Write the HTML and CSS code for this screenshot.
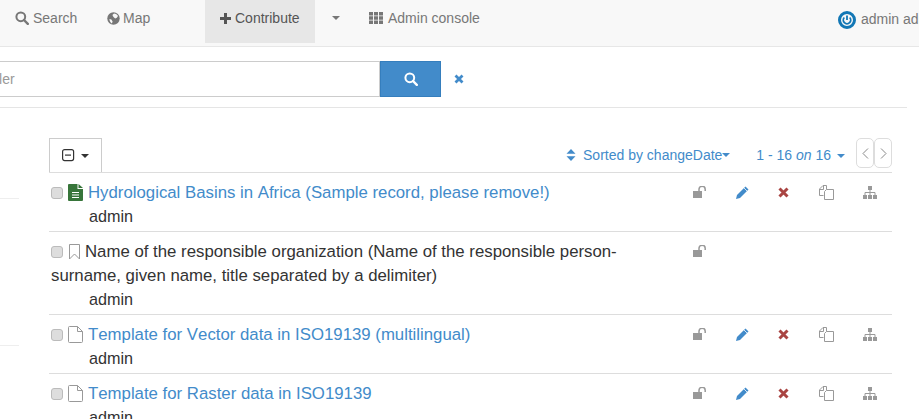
FILE: index.html
```html
<!doctype html>
<html>
  <head>
    <meta charset="utf-8">
    <title>Search and edit</title>
    <link rel="stylesheet" href="styles.css">
  </head>
  <body>
    <nav class="topbar">
      <a class="nav-item nav-search"><svg class="ico" width="14" height="14" viewBox="0 0 14 14"><circle cx="5.800" cy="5.800" r="4.400" fill="none" stroke="currentColor" stroke-width="2"/><path d="M9 9l3.800 3.800" stroke="currentColor" stroke-width="2.400" stroke-linecap="round"/></svg>Search</a>
      <a class="nav-item nav-map"><svg class="ico" width="13" height="13" viewBox="0 0 13 13"><circle cx="6.500" cy="6.500" r="6.200" fill="currentColor"/><path d="M7 1.500c1.800.2 3.200 1.100 4 2.400L9.800 5.800 8.200 6.400 6.500 5 5.400 3zM2.400 7l2 .6 1.200 2-.7 1.800C3.500 11 2.600 9 2.400 7z" fill="#f8f8f8"/></svg>Map</a>
      <a class="nav-item nav-active"><svg class="ico" width="11" height="11" viewBox="0 0 11 11"><path d="M4 0h3v4h4v3H7v4H4V7H0V4h4z" fill="currentColor"/></svg>Contribute</a>
      <a class="nav-caret"><span class="caret"></span></a>
      <a class="nav-item nav-admin"><svg class="ico ico-wide" width="14" height="12" viewBox="0 0 14 12"><path d="M0 0h4v3.400H0zM5 0h4v3.400H5zM10 0h4v3.400h-4zM0 4.300h4v3.400H0zM5 4.300h4v3.400H5zM10 4.300h4v3.400h-4zM0 8.600h4V12H0zM5 8.600h4V12H5zM10 8.600h4V12h-4z" fill="currentColor"/></svg>Admin console</a>
      <a class="nav-user"><svg class="ico ico-wide" width="18" height="18" viewBox="0 0 18 18"><circle cx="9" cy="9" r="7.500" fill="none" stroke="#1277b5" stroke-width="3"/><path d="M6.300 6.500a3.700 3.700 0 1 0 5.400 0" fill="none" stroke="#1277b5" stroke-width="1.800"/><path d="M9 4.500V9" stroke="#1277b5" stroke-width="1.800"/></svg>admin admin</a>
    </nav>

    <div class="search-row">
      <div class="search-field">filler</div>
      <button class="search-btn"><svg width="14" height="14" viewBox="0 0 14 14"><circle cx="5.800" cy="5.800" r="4.400" fill="none" stroke="#fff" stroke-width="2"/><path d="M9 9l3.800 3.800" stroke="#fff" stroke-width="2.400" stroke-linecap="round"/></svg></button>
      <svg class="search-clear" width="10" height="10" viewBox="0 0 10 10"><path d="M1.500 1.500l7 7M8.500 1.500l-7 7" stroke="#428bca" stroke-width="2.800"/></svg>
    </div>

    <div class="content">
      <aside class="facets">
        <div class="facet facet-one"></div>
        <div class="facet facet-two"></div>
      </aside>

      <section class="results">
        <div class="toolbar">
          <button class="select-btn"><svg width="13" height="13" viewBox="0 0 13 13"><rect x=".6" y=".6" width="11" height="11" rx="2" fill="none" stroke="#333" stroke-width="1.200"/><path d="M3 6.100h6" stroke="#333" stroke-width="1.200"/></svg><span class="caret dark"></span></button>
          <div class="tools">
            <a class="sort"><svg width="10" height="12" viewBox="0 0 10 12"><path d="M5 0l4.500 4.700H.5zM5 12L.5 7.300h9z" fill="#428bca"/></svg>Sorted by changeDate<span class="caret blue tight"></span></a>
            <a class="range">1 - 16 <i>on</i> 16 <span class="caret blue"></span></a>
            <div class="pager">
              <button class="page-btn"><svg width="7" height="11" viewBox="0 0 7 11"><path d="M6 .5L1 5.500l5 5" fill="none" stroke="#888" stroke-width="1"/></svg></button>
              <button class="page-btn"><svg width="7" height="11" viewBox="0 0 7 11"><path d="M1 .5l5 5-5 5" fill="none" stroke="#888" stroke-width="1"/></svg></button>
            </div>
          </div>
        </div>

        <div id="rows"></div>
      </section>
    </div>

    <script>
      // records shown in the list
      const records = [
        { title: "Hydrological Basins in Africa (Sample record, please remove!)", icon: "dataset", link: true, full: true },
        { title: "Name of the responsible organization (Name of the responsible person-surname, given name, title separated by a delimiter)", icon: "bookmark", link: false, full: false },
        { title: "Template for Vector data in ISO19139 (multilingual)", icon: "file", link: true, full: true },
        { title: "Template for Raster data in ISO19139", icon: "file", link: true, full: true }
      ];

      const icons = {
        dataset: '<svg class="type" width="15" height="17" viewBox="0 0 15 17"><path d="M1 0H9.500v5h5.500v11a1 1 0 0 1-1 1H1a1 1 0 0 1-1-1V1a1 1 0 0 1 1-1zM10.500 0L15 4h-4.500z" fill="#37753a"/><path d="M4 8.500h7M4 11h7M4 13.500h7" stroke="#fff" stroke-width="1.200"/></svg>',
        bookmark: '<svg class="type type-mark" width="13" height="16" viewBox="0 0 13 16"><path d="M1.500.5h10v14.500l-5-5-5 5z" fill="none" stroke="#999" stroke-width="1"/></svg>',
        file: '<svg class="type" width="15" height="17" viewBox="0 0 15 17"><path d="M1.500.5h8l5 5v10a1 1 0 0 1-1 1h-12a1 1 0 0 1-1-1v-14a1 1 0 0 1 1-1zM9.500.5v5h5" fill="none" stroke="#999" stroke-width="1"/></svg>'
      };

      const lock = '<svg width="13" height="12" viewBox="0 0 13 12"><path d="M0 5h9v7H0z" fill="#999"/><path d="M6 5V3.300a3 3 0 0 1 6.200 0V5" fill="none" stroke="#999" stroke-width="1.500"/></svg>';
      const pencil = '<svg width="13" height="13" viewBox="0 0 13 13"><path d="M9.500.5l3 3-8.500 8.500L0 13l1-4z" fill="#428bca"/><path d="M8 2l3 3" stroke="#fff" stroke-width=".8"/></svg>';
      const cross = '<svg width="11" height="11" viewBox="0 0 11 11"><path d="M1.500 1.500l8 8M9.500 1.500l-8 8" stroke="#a94442" stroke-width="3"/></svg>';
      const copy = '<svg width="15" height="15" viewBox="0 0 15 15"><path d="M4.500 10.500H.5V4l3.500-3.500h3.500v4" fill="none" stroke="#999"/><path d="M.5 4.500H4.500v-4" fill="none" stroke="#999"/><path d="M7.500 4.500h7v10h-9V6.500z" fill="#fff" stroke="#999"/></svg>';
      const tree = '<svg width="14" height="13" viewBox="0 0 14 13"><path d="M5 0h4v4H5zM0 9h4v4H0zM5 9h4v4H5zM10 9h4v4h-4z" fill="#999"/><path d="M7 4v5M2 9V6.500h10V9" fill="none" stroke="#999"/></svg>';

      const rows = document.getElementById('rows');

      for (let i = 0; i < records.length; i++) {
        const r = records[i];
        const row = document.createElement('div');
        row.classList.add('row');

        const titleHtml = r.link ? `<a class="title-link">${r.title}</a>` : r.title;
        let actions = `<span class="act">${lock}</span>`;
        if (r.full) {
          actions += `<span class="act">${pencil}</span><span class="act act-left">${cross}</span><span class="act act-left">${copy}</span><span class="act">${tree}</span>`;
        }

        row.innerHTML = `
          <div class="row-main">
            <div class="row-title"><span class="check"></span>${icons[r.icon]}${titleHtml}</div>
            <div class="row-author">admin</div>
          </div>
          <div class="row-actions">${actions}</div>`;
        rows.appendChild(row);
      }
    </script>
  </body>
</html>
```

FILE: styles.css
```css
html, body {
  margin: 0;
  height: 419px;
  overflow: hidden;
}
body {
  background-color: #fff;
  color: #333;
  font-family: "Liberation Sans", Arial, sans-serif;
  font-size: 14px;
}
button {
  font: inherit;
  background: #fff;
  padding: 0;
}

/* top bar */
.topbar {
  display: flex;
  height: 46px;
  background-color: #f8f8f8;
  border-bottom: 1px solid #e7e7e7;
  color: #777;
  white-space: nowrap;
}
.nav-item {
  display: flex;
  align-items: center;
  height: 36px;
  flex: none;
}
.ico {
  margin-right: 4px;
  flex: none;
}
.ico-wide {
  margin-right: 5px;
}
.nav-search {
  margin-left: 15px;
  width: 92px;
}
.nav-map {
  width: 98px;
}
.nav-map .ico {
  margin-right: 3px;
}
.nav-active {
  background-color: #e7e7e7;
  color: #555;
  width: 110px;
  height: 43px;
  padding-left: 15px;
  box-sizing: border-box;
  padding-bottom: 7px;
}
.nav-caret {
  width: 54px;
  height: 36px;
  display: flex;
  flex: none;
  align-items: center;
  padding-left: 17px;
  box-sizing: border-box;
}
.nav-admin {
  width: 469px;
}
.nav-user {
  display: flex;
  align-items: center;
  height: 38px;
  flex: none;
}
.nav-user svg {
  margin-top: 2px;
}
.caret {
  display: inline-block;
  width: 0;
  height: 0;
  border-top: 4px solid #777;
  border-left: 4px solid transparent;
  border-right: 4px solid transparent;
}
.caret.dark {
  border-top-color: #333;
  margin-left: 6px;
}
.caret.blue {
  border-top-color: #428bca;
  vertical-align: 2px;
  margin-left: 2px;
}
.caret.tight {
  margin-left: 0;
}

/* search */
.search-row {
  display: flex;
  align-items: center;
  margin-top: 14px;
  height: 36px;
}
.search-field {
  width: 383px;
  margin-left: -3px;
  height: 36px;
  box-sizing: border-box;
  border: 1px solid #ccc;
  border-left: 0;
  font-size: 14px;
  line-height: 34px;
  color: #999;
  text-indent: -8px;
}
.search-btn {
  width: 61px;
  height: 36px;
  background-color: #428bca;
  border: 1px solid #357ebd;
  display: flex;
  align-items: center;
  justify-content: center;
}
.search-clear {
  margin-left: 13px;
}

/* results */
.content {
  display: flex;
  margin-top: 10px;
  border-top: 1px solid #e5e5e5;
  width: 907px;
  padding-top: 30px;
}
.facets {
  width: 19px;
  flex: none;
  margin-right: 30px;
}
.facet {
  border-bottom: 1px solid #eee;
}
.facet-one {
  height: 60px;
}
.facet-two {
  height: 146px;
}
.results {
  width: 843px;
  flex: none;
  font-size: 16.800px;
  font-kerning: none;
}
.toolbar {
  display: flex;
  justify-content: space-between;
  height: 34px;
  border-bottom: 1px solid #ddd;
}
.select-btn {
  width: 53px;
  height: 34px;
  border: 1px solid #ccc;
  border-bottom: 0;
  display: flex;
  align-items: center;
  justify-content: center;
}
.tools {
  display: flex;
  font-size: 14px;
  color: #428bca;
}
.sort {
  display: flex;
  align-items: center;
  height: 34px;
  margin-right: 26px;
}
.sort svg {
  margin-right: 7px;
}
.range {
  line-height: 34px;
  margin-right: 11px;
}
.pager {
  display: flex;
}
.page-btn {
  width: 18px;
  height: 30px;
  border: 1px solid #ddd;
  border-radius: 5px;
  display: flex;
  align-items: center;
  justify-content: center;
}
.row {
  display: flex;
  justify-content: space-between;
  padding: 8px 0 3px;
  border-bottom: 1px solid #ddd;
  line-height: 24px;
}
.row-main {
  width: 622px;
  padding-left: 2px;
  box-sizing: border-box;
}
.row-title {
  color: #333;
}
.title-link {
  color: #428bca;
}
.check {
  display: inline-block;
  width: 12px;
  height: 12px;
  box-sizing: border-box;
  border: 1px solid #bbb;
  border-radius: 3px;
  background-color: #ddd;
  vertical-align: -1px;
  margin-right: 5px;
}
.type {
  vertical-align: -3px;
  margin-right: 5px;
}
.type-mark {
  margin-right: 4px;
}
.row-author {
  padding-left: 38px;
  margin-top: -1px;
  font-size: 16.200px;
}
.row-actions {
  width: 213.750px;
  display: flex;
  height: 24px;
  align-items: center;
  align-self: flex-start;
  margin-top: -1px;
}
.act {
  width: 42.500px;
  display: flex;
  justify-content: center;
  flex: none;
}
.act-left {
  box-sizing: border-box;
  padding-right: 2px;
}
```
